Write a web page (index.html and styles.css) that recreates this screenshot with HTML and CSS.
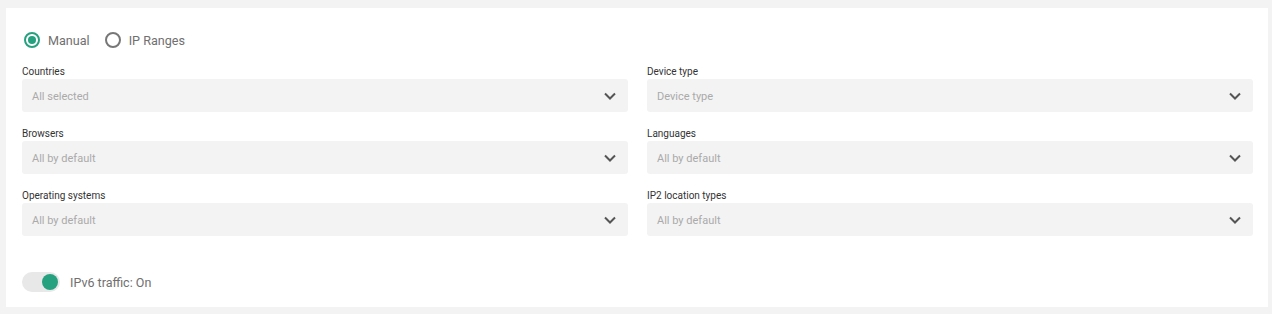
FILE: index.html
```html
<!DOCTYPE html>
<html lang="en">
<head>
    <meta charset="UTF-8">
    <title>Targeting</title>
    <link rel="stylesheet" href="styles.css">
</head>
<body>
    <div class="card">
        <div class="radio-group">
            <label class="radio checked"><span class="radio-dot"></span>Manual</label>
            <label class="radio"><span class="radio-dot"></span>IP Ranges</label>
        </div>

        <div class="fields">
            <div class="field">
                <div class="field-label">Countries</div>
                <div class="select"><span>All selected</span><svg class="chevron" viewBox="0 0 12 8"><path d="M1 1.5l5 5 5-5"/></svg></div>
            </div>
            <div class="field">
                <div class="field-label">Device type</div>
                <div class="select"><span>Device type</span><svg class="chevron" viewBox="0 0 12 8"><path d="M1 1.5l5 5 5-5"/></svg></div>
            </div>
            <div class="field">
                <div class="field-label">Browsers</div>
                <div class="select"><span>All by default</span><svg class="chevron" viewBox="0 0 12 8"><path d="M1 1.5l5 5 5-5"/></svg></div>
            </div>
            <div class="field">
                <div class="field-label">Languages</div>
                <div class="select"><span>All by default</span><svg class="chevron" viewBox="0 0 12 8"><path d="M1 1.5l5 5 5-5"/></svg></div>
            </div>
            <div class="field">
                <div class="field-label">Operating systems</div>
                <div class="select"><span>All by default</span><svg class="chevron" viewBox="0 0 12 8"><path d="M1 1.5l5 5 5-5"/></svg></div>
            </div>
            <div class="field">
                <div class="field-label">IP2 location types</div>
                <div class="select"><span>All by default</span><svg class="chevron" viewBox="0 0 12 8"><path d="M1 1.5l5 5 5-5"/></svg></div>
            </div>
        </div>

        <div class="toggle-row">
            <span class="toggle on"><span class="toggle-knob"></span></span>
            <span class="toggle-text">IPv6 traffic: On</span>
        </div>
    </div>
</body>
</html>
```

FILE: styles.css
```css
body {
    margin: 0;
    padding: 8px 4px 6px 6px;
    background-color: #f3f3f3;
    font-family: Roboto, "Liberation Sans", sans-serif;
}
.card {
    background-color: #fff;
    padding: 24px 15px 15px 16px;
}
.radio-group {
    display: flex;
    align-items: center;
    gap: 15px;
    height: 16px;
    margin-left: 2px;
}
.radio {
    display: flex;
    align-items: center;
    gap: 8px;
    font-size: 12.6px;
    color: #707070;
}
.radio-dot {
    box-sizing: border-box;
    width: 16px;
    height: 16px;
    border: 2px solid #777;
    border-radius: 50%;
    display: flex;
    align-items: center;
    justify-content: center;
}
.radio.checked .radio-dot {
    border-color: #26a17f;
}
.radio.checked .radio-dot::after {
    content: "";
    width: 8px;
    height: 8px;
    border-radius: 50%;
    background-color: #26a17f;
}
.fields {
    display: grid;
    grid-template-columns: 1fr 1fr;
    column-gap: 19px;
    row-gap: 14px;
    margin-top: 16px;
}
.field-label {
    font-size: 10px;
    line-height: 13px;
    color: #333;
    padding-top: 1px;
    margin-bottom: 1px;
}
.select {
    height: 33px;
    background-color: #f3f3f3;
    border-radius: 3px;
    display: flex;
    align-items: center;
    justify-content: space-between;
    padding: 1px 12px 0 10px;
    box-sizing: border-box;
    font-size: 11px;
    color: #aaa;
}
.chevron {
    width: 12px;
    height: 8px;
    fill: none;
    stroke: #555;
    stroke-width: 2;
}
.toggle-row {
    display: flex;
    align-items: center;
    gap: 10px;
    margin-top: 36px;
}
.toggle {
    width: 38px;
    height: 20px;
    border-radius: 10px;
    background-color: #e8e8e8;
    display: flex;
    align-items: center;
    justify-content: flex-end;
    padding: 0 2px;
    box-sizing: border-box;
}
.toggle-knob {
    width: 16px;
    height: 16px;
    border-radius: 50%;
    background-color: #26a17f;
}
.toggle-text {
    font-size: 12.5px;
    color: #707070;
}
```
